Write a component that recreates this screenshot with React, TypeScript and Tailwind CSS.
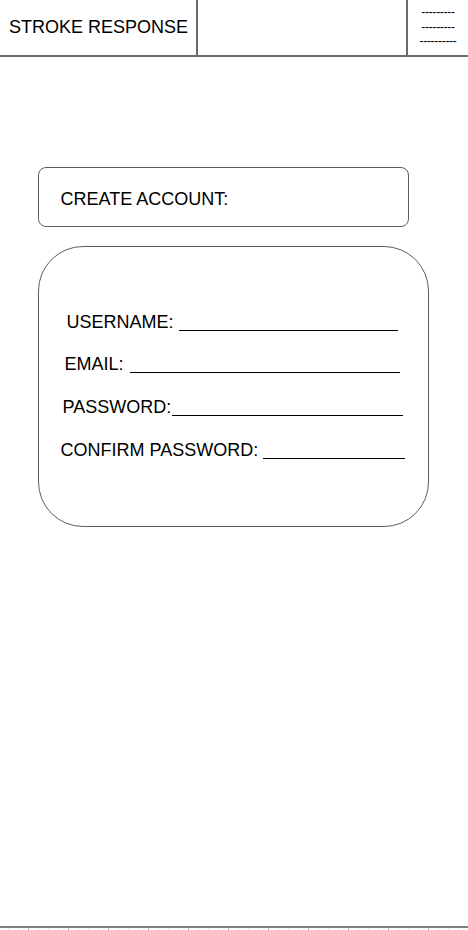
import React from 'react'

const fields = [
  { label: 'USERNAME:', row: 'pl-[27.5px] pr-[30px]', gap: 'ml-[5px]' },
  { label: 'EMAIL:', row: 'pl-[25.5px] pr-[28px]', gap: 'ml-[6px]' },
  { label: 'PASSWORD:', row: 'pl-[23.5px] pr-[25px]', gap: 'ml-[1px]' },
  { label: 'CONFIRM PASSWORD:', row: 'pl-[21.5px] pr-[23px]', gap: 'ml-[5px]' },
]

export default function App() {
  return (
    <div className="h-[930px] w-[468px] bg-white flex flex-col text-black font-['Liberation_Sans',Arial,sans-serif] overflow-hidden">
      {/* Top bar */}
      <header className="h-[57px] shrink-0 flex border-b-2 border-[#6b6b6b]">
        <div className="w-[198px] flex items-center pl-[9px] pb-[1px] text-[18px] leading-none border-r-2 border-[#6b6b6b]">
          STROKE RESPONSE
        </div>
        <div className="w-[210px] border-r-2 border-[#6b6b6b]" />
        <div className="flex-1 flex flex-col items-center pt-[5px] text-[12px] leading-[14.5px] tracking-[-0.3px]">
          <span>---------</span>
          <span>---------</span>
          <span>----------</span>
        </div>
      </header>

      <main className="flex-1 pt-[110px] pl-[38px]">
        <div className="w-[371px] h-[60px] rounded-[8px] border-[1.5px] border-[#5e5e5e] flex items-center pl-[21.5px] pt-[4px] text-[18px] leading-[20px]">
          CREATE ACCOUNT:
        </div>

        <div className="mt-[19px] w-[391px] h-[281px] rounded-[45px] border-[1.5px] border-[#5e5e5e] pt-[64.5px] flex flex-col gap-[22.7px]">
          {fields.map(f => (
            <div key={f.label} className={`flex items-end text-[18px] leading-[20px] ${f.row}`}>
              <span className="whitespace-nowrap">{f.label}</span>
              <span className={`flex-1 border-b-[1.5px] border-black mb-[1px] ${f.gap}`} />
            </div>
          ))}
        </div>
      </main>

      {/* Bottom tab bar, cut off by the viewport */}
      <footer className="h-[4px] shrink-0 border-t-2 border-[#808080] flex pl-[8px]">
        {Array.from({ length: 46 }).map((_, i) => (
          <div
            key={i}
            className={`w-[10px] shrink-0 border-l ${i % 4 === 2 ? 'border-[#b0b0b0]' : 'border-[#e6e6e6]'}`}
          />
        ))}
      </footer>
    </div>
  )
}
